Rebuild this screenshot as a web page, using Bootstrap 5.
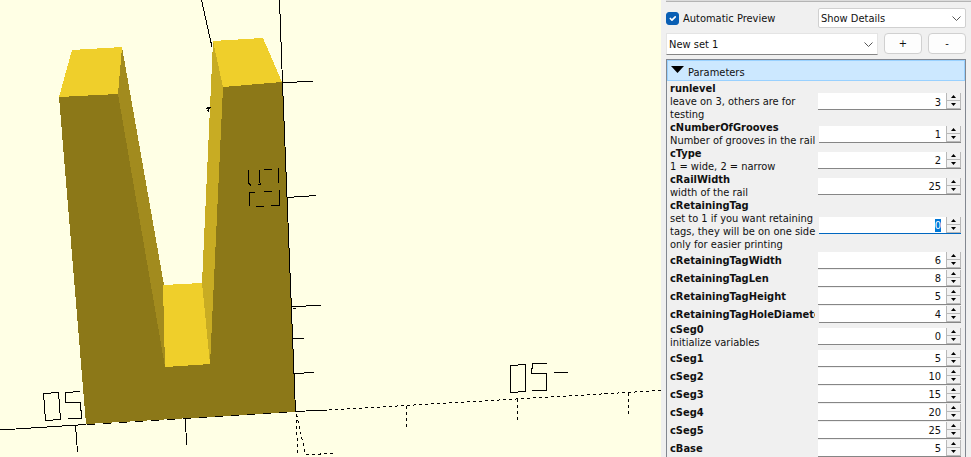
<!DOCTYPE html>
<html lang="en">
<head>
<meta charset="utf-8">
<meta name="viewport" content="width=device-width, initial-scale=1">
<title>Customizer</title>
<link rel="stylesheet" href="https://cdn.jsdelivr.net/npm/bootstrap@5.3.0/dist/css/bootstrap.min.css">
<style>
body{font-family:"DejaVu Sans Condensed","Noto Sans",sans-serif;font-size:11px;line-height:13px;color:#111;background:#f0f0f0}
.viewer{background:#ffffe5;min-width:0}
.side{width:310px;padding:0 5px;background:#f0f0f0}
.dock-edge{height:2px;margin:0 -5px 6px 0;background:#dcdcdc;border-bottom:1px solid #b4b4b4}
.side .form-check-input{width:13px;height:13px;margin:0;border-radius:3px;border-color:#0a5fb4;background-color:#0a5fb4}
.side .form-select{font-size:11px;line-height:13px;height:20px;padding:2px 20px 2px 2px;border:1px solid #d0d0d0;border-radius:2px;color:#111;background-color:#fff;background-position:right 4px center;background-size:9px 9px;
background-image:url("data:image/svg+xml,%3csvg xmlns='http://www.w3.org/2000/svg' viewBox='0 0 9 9'%3e%3cpath d='M.5 2.5l4 4 4-4' fill='none' stroke='%23555'/%3e%3c/svg%3e")}
.side .detail-pick{width:148px}
.side .set-pick{height:22px;border-color:#e4e4e4 #e4e4e4 #868686;border-radius:0}
.set-bar{gap:6px;margin-top:5px}
.side .btn-set{width:38px;height:21px;padding:0;font-size:11px;line-height:13px;background:#fdfdfd;border:1px solid #d0d0d0;border-radius:4px;color:#111}
.param-panel{border:1px solid #828790;border-bottom:0;margin-top:4px;min-height:0}
.param-head{height:21px;border:1px solid #99d1ff;background:#cce8ff;padding:5px 3px 0;font-size:11px;line-height:13px;color:#111;text-align:left}
.param-list{padding:1px 4px 0 3px}
.param-row{min-height:18px}
.param-row label{width:145px;white-space:nowrap}
.param-row b{display:block;overflow:hidden}
.param-row small{display:block;font-size:11px;white-space:pre}
.spin{height:17px;background:#fff;border-bottom:1px solid #868686}
.spin input{min-width:0;width:100%;height:16px;padding:2px 5px 0 0;border:0;outline:0;background:transparent;text-align:right;font-size:11px;line-height:13px;color:#111}
.spin:focus-within{border-color:#0067c0}
.spin input::selection{background:#0078d7;color:#fff}
.steps{width:15px;flex:none;background:#f0f0f0}
.steps button{height:8px;width:15px;padding:0;border:solid #b8b8b8;border-width:0 1px 1px;background:#f2f2f2;display:flex;align-items:center;justify-content:center}
</style>
<script src="https://cdn.jsdelivr.net/npm/bootstrap@5.3.0/dist/js/bootstrap.bundle.min.js"></script>
</head>
<body>
<div class="d-flex vh-100 overflow-hidden">
<main class="viewer flex-grow-1">
<svg class="d-block w-100 h-100" viewBox="0 0 661 457" role="img" aria-label="3D preview of the rail" shape-rendering="crispEdges">
<path fill="#8c7818" d="M59 97L118 94L165 367L210 364L223 86L282 82L295 412L86 424Z"/>
<path fill="#a28b1e" d="M118 94L122 47L164 285L165 367Z"/>
<path fill="#c8ac23" d="M213 41L223 87L210 365L202 283Z"/>
<path fill="#efcf2b" d="M72 50L122 47L118 94L59 97ZM213 41L263 38L282 82L223 87ZM163 285L202 283L210 364L165 367Z"/>
<g fill="none" stroke="#000">
<path d="M201.500 0L212 47M279.500 0L282.500 83L295.500 412M282 82.500L313 81.500M287 197.500L316 195.500M292 306.500L321 305.500M293 308.500H296M293 338.500H304M294 373.500L314 372.500M295 411.500L327 410"/>
<path d="M0 430L86 424.500M75.500 425L77.500 452M185.500 419L186.500 445"/>
<path stroke-dasharray="8 8" d="M87 424.500L295 412"/>
<path stroke-dasharray="3 3" d="M329 410L661 390.500M406.500 406V430M517.500 399V423M628.500 393V417M296.500 414L297.500 456M296.500 414L305.500 454.500L336 453.500"/>
<path d="M43.500 393.500L58.500 392.500L60.500 419.500L45.500 420.500ZM80 391.500L65.500 392.500V402.500H80.500L81.500 418.500H68"/>
<path d="M510.500 365.500L525.500 364.500V391.500L510.500 392.500ZM547 363.500H532.500L531.500 374L546.500 373.500V390.500H532M554 372.500H568"/>
<path d="M248.500 170V183L251 185.500M259.500 170V181L260.500 184.500H258M264 169.500H272M278.500 168V183M264 191.500H272M255 192.500H249.500V206M256 206.500H264M271 205.500H279.500V190"/>
<path d="M206 108.500H210M208.500 107V112M207 110.500H209M207 107.500H211"/>
</g>
</svg>
</main>
<aside class="side d-flex flex-column flex-shrink-0">
<div class="dock-edge flex-shrink-0"></div>
<div class="d-flex align-items-center justify-content-between">
<div class="d-flex align-items-center gap-1"><input class="form-check-input" type="checkbox" id="auto" checked><label for="auto">Automatic Preview</label></div>
<select class="form-select detail-pick" aria-label="Description detail"><option>Show Details</option></select>
</div>
<div class="set-bar d-flex">
<select class="form-select set-pick flex-grow-1" aria-label="Parameter set"><option>New set 1</option></select>
<button class="btn btn-set flex-shrink-0" type="button" aria-label="Add set">+</button>
<button class="btn btn-set flex-shrink-0" type="button" aria-label="Remove set">-</button>
</div>
<section class="param-panel flex-grow-1 overflow-hidden">
<button type="button" class="param-head w-100 d-flex gap-1" aria-expanded="true"><svg width="13" height="8" viewBox="0 0 13 8" aria-hidden="true"><path d="M0 0H13L6.500 7Z"/></svg><span>Parameters</span></button>
<form class="param-list" id="params"></form>
</section>
</aside>
</div>
<script>
const params = [
["runlevel", 3, "leave on 3, others are for\ntesting"],
["cNumberOfGrooves", 1, "Number of grooves in the rail"],
["cType", 2, "1 = wide, 2 = narrow"],
["cRailWidth", 25, "width of the rail"],
["cRetainingTag", 0, "set to 1 if you want retaining\ntags, they will be on one side\nonly for easier printing"],
["cRetainingTagWidth", 6], ["cRetainingTagLen", 8], ["cRetainingTagHeight", 5], ["cRetainingTagHoleDiameter", 4],
["cSeg0", 0, "initialize variables"],
["cSeg1", 5], ["cSeg2", 10], ["cSeg3", 15], ["cSeg4", 20], ["cSeg5", 25], ["cBase", 5]
];
const arrow = d => `<svg width="5" height="3" viewBox="0 0 5 3" aria-hidden="true"><path d="${d}"/></svg>`;
document.getElementById("params").innerHTML = params.map(([name, value, note]) => `
<div class="param-row d-flex align-items-center">
<label for="${name}"><b>${name}</b>${note ? `<small>${note}</small>` : ""}</label>
<div class="spin d-flex flex-grow-1 ms-1"><input id="${name}" type="text" inputmode="numeric" value="${value}">
<div class="steps"><button type="button" aria-label="Increase ${name}" data-step="1">${arrow("M2.5 0L5 3H0Z")}</button><button type="button" aria-label="Decrease ${name}" data-step="-1">${arrow("M0 0H5L2.5 3Z")}</button></div></div>
</div>`).join("");
document.getElementById("params").addEventListener("click", e => {
const b = e.target.closest("[data-step]");
if (!b) return;
const field = b.closest(".spin").querySelector("input");
field.value = Number(field.value) + Number(b.dataset.step);
});
const active = document.getElementById("cRetainingTag");
active.focus({preventScroll: true});
active.select();
</script>
</body>
</html>
